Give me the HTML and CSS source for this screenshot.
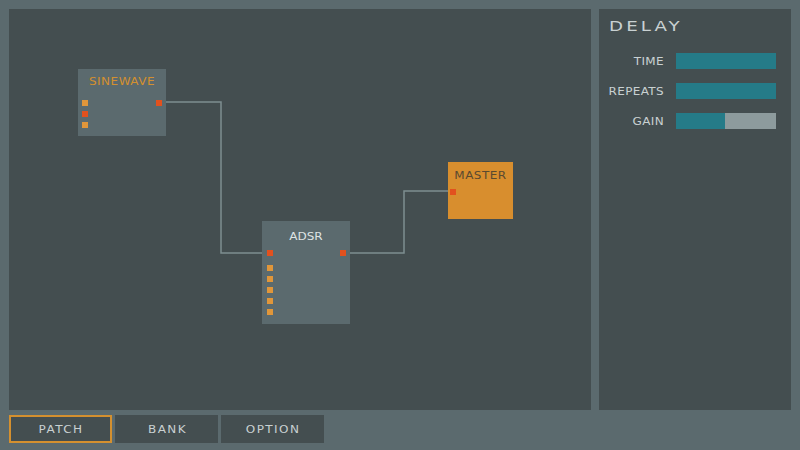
FILE: index.html
```html
<!DOCTYPE html>
<html>
<head>
<meta charset="utf-8">
<link rel="stylesheet" href="styles.css">
</head>
<body>
<div class="app">
  <div class="main">
    <div class="canvas">
      <svg class="wires" width="582" height="401" viewBox="0 0 582 401">
        <polyline points="157,93 212,93 212,244 253,244" />
        <polyline points="341,244 395,244 395,182 439,182" />
      </svg>
      <div class="node sine" style="left:69px;top:60px;width:88px;height:67px">
        <div class="title">SINEWAVE</div>
        <span class="port in o" style="left:4px;top:31px"></span>
        <span class="port in r" style="left:4px;top:42px"></span>
        <span class="port in o" style="left:4px;top:53px"></span>
        <span class="port out r" style="left:78px;top:31px"></span>
      </div>
      <div class="node adsr" style="left:253px;top:212px;width:88px;height:103px">
        <div class="title">ADSR</div>
        <span class="port r" style="left:5px;top:29px"></span>
        <span class="port r" style="left:78px;top:29px"></span>
        <span class="port o" style="left:5px;top:44px"></span>
        <span class="port o" style="left:5px;top:55px"></span>
        <span class="port o" style="left:5px;top:66px"></span>
        <span class="port o" style="left:5px;top:77px"></span>
        <span class="port o" style="left:5px;top:88px"></span>
      </div>
      <div class="node master" style="left:439px;top:153px;width:65px;height:57px">
        <div class="title">MASTER</div>
        <span class="port r" style="left:2px;top:27px"></span>
      </div>
    </div>
    <div class="panel">
      <div class="ptitle">DELAY</div>
      <div class="rows">
        <div class="row"><span class="lbl">TIME</span><div class="bar"><div class="fill" style="width:100%"></div></div></div>
        <div class="row"><span class="lbl">REPEATS</span><div class="bar"><div class="fill" style="width:100%"></div></div></div>
        <div class="row"><span class="lbl">GAIN</span><div class="bar"><div class="fill" style="width:49%"></div></div></div>
      </div>
    </div>
  </div>
  <div class="tabs">
    <div class="tab active"><span>PATCH</span></div>
    <div class="tab"><span>BANK</span></div>
    <div class="tab"><span>OPTION</span></div>
  </div>
</div>
</body>
</html>
```
FILE: styles.css
```css
html, body {
  margin: 0;
  padding: 0;
  background: #5b6a6e;
  font-family: "DejaVu Sans", "Liberation Sans", sans-serif;
}
.app {
  width: 800px;
  height: 450px;
  box-sizing: border-box;
  padding: 9px 9px 0 9px;
  display: flex;
  flex-direction: column;
}
.main {
  display: flex;
  gap: 8px;
  height: 401px;
}
.canvas {
  position: relative;
  width: 582px;
  height: 401px;
  background: #444e50;
}
.wires {
  position: absolute;
  left: 0;
  top: 0;
}
.wires polyline {
  fill: none;
  stroke: #7d8e90;
  stroke-width: 1.5;
}
.node {
  position: absolute;
  background: #5b6a6e;
  box-sizing: border-box;
}
.node .title {
  text-align: center;
  font-size: 10px;
  line-height: 10px;
  padding-top: 8px;
  transform: scaleX(1.2);
  transform-origin: center;
}
.sine .title { color: #d4902f; letter-spacing: 0.4px; }
.adsr .title { color: #dfe4e4; padding-top: 11px; }
.master { background: #d88e2e; }
.master .title { color: #5a4a30; padding-top: 9px; letter-spacing: 0.4px; }
.port {
  position: absolute;
  width: 6px;
  height: 6px;
}
.port.o { background: #e0963a; }
.port.r { background: #e2511e; }
.panel {
  width: 192px;
  height: 401px;
  background: #444e50;
  box-sizing: border-box;
  padding: 10px 0 0 10px;
  font-size: 10px;
}
.ptitle {
  width: max-content;
  color: #c9d1d2;
  font-size: 13.5px;
  letter-spacing: 2.3px;
  line-height: 15px;
  transform: scaleX(1.35);
  transform-origin: left center;
}
.rows {
  margin-top: 19px;
  display: flex;
  flex-direction: column;
  gap: 14px;
}
.row {
  display: flex;
  align-items: center;
  height: 16px;
}
.lbl {
  width: 55px;
  text-align: right;
  color: #c9d1d2;
  font-size: 10px;
  letter-spacing: 0.3px;
  margin-right: 12px;
  transform: scaleX(1.2);
  transform-origin: right center;
}
.bar {
  width: 100px;
  height: 16px;
  background: #8d9b9d;
}
.fill {
  height: 100%;
  background: #257b88;
}
.tabs {
  display: flex;
  gap: 3px;
  margin-top: 5px;
}
.tab {
  width: 103px;
  height: 28px;
  box-sizing: border-box;
  background: #444e50;
  color: #c9d1d2;
  font-size: 10px;
  display: flex;
  align-items: center;
  justify-content: center;
}
.tab span {
  letter-spacing: 1.2px;
  text-indent: 1.2px;
  transform: scaleX(1.2);
}
.tab.active {
  border: 2px solid #d4902f;
}
```
